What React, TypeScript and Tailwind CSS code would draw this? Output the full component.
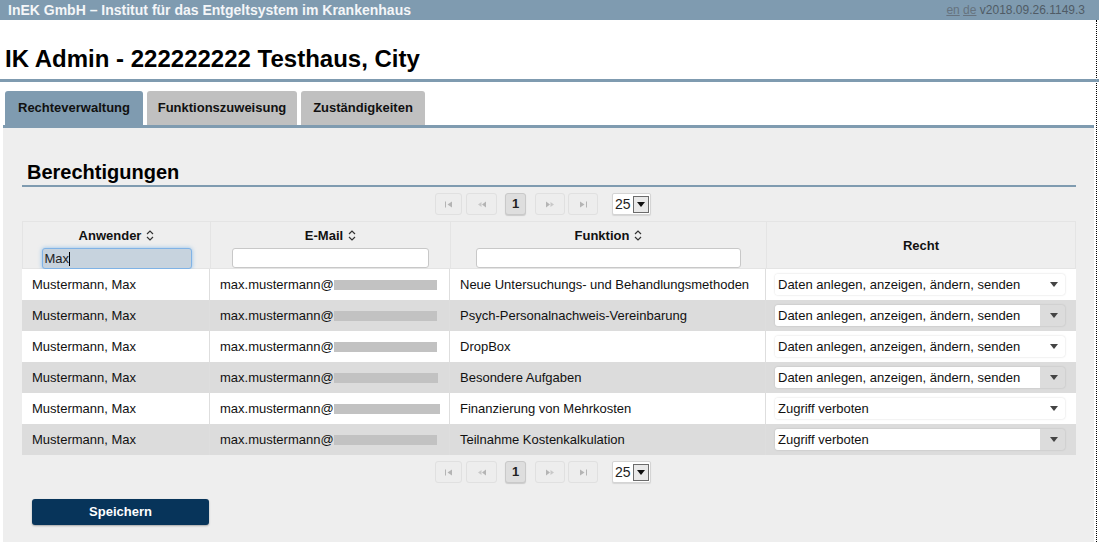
import React from 'react';

const rows: { funktion: string; recht: string; bar: number }[] = [
  { funktion: 'Neue Untersuchungs- und Behandlungsmethoden', recht: 'Daten anlegen, anzeigen, ändern, senden', bar: 103 },
  { funktion: 'Psych-Personalnachweis-Vereinbarung', recht: 'Daten anlegen, anzeigen, ändern, senden', bar: 103 },
  { funktion: 'DropBox', recht: 'Daten anlegen, anzeigen, ändern, senden', bar: 103 },
  { funktion: 'Besondere Aufgaben', recht: 'Daten anlegen, anzeigen, ändern, senden', bar: 104 },
  { funktion: 'Finanzierung von Mehrkosten', recht: 'Zugriff verboten', bar: 106 },
  { funktion: 'Teilnahme Kostenkalkulation', recht: 'Zugriff verboten', bar: 103 },
];

const PagIcon = ({ kind }: { kind: 'first' | 'prev' | 'next' | 'last' }) => (
  <svg width="10" height="7" viewBox="0 0 10 7" className="fill-[#b4b4b4]">
    {kind === 'first' && (
      <>
        <rect x="1" y="0.5" width="1" height="6" />
        <polygon points="8,0.5 3.5,3.5 8,6.5" />
      </>
    )}
    {kind === 'prev' && (
      <>
        <polygon points="4.5,1 1,3.5 4.5,6" className="fill-[#c8c8c8]" />
        <polygon points="9,0.5 5,3.5 9,6.5" />
      </>
    )}
    {kind === 'next' && (
      <>
        <polygon points="1,0.5 5,3.5 1,6.5" />
        <polygon points="5.5,1 9,3.5 5.5,6" className="fill-[#c8c8c8]" />
      </>
    )}
    {kind === 'last' && (
      <>
        <polygon points="2,0.5 6.5,3.5 2,6.5" />
        <rect x="8" y="0.5" width="1" height="6" />
      </>
    )}
  </svg>
);

const pagBtn =
  'h-[22px] flex items-center justify-center rounded-[3px] border border-[#e0e0e0] bg-[#ededed]';

const Paginator = () => (
  <div className="flex items-center justify-center pr-[12px] h-[34px]">
    <div className={`${pagBtn} w-[27px]`}>
      <PagIcon kind="first" />
    </div>
    <div className={`${pagBtn} w-[31px] ml-[4px]`}>
      <PagIcon kind="prev" />
    </div>
    <div className="ml-[8px] w-[21px] h-[22px] flex items-center justify-center rounded-[3px] border border-[#c9c9c9] bg-[#dedede] shadow-[0_1px_1px_rgba(0,0,0,0.15)] text-[13px] font-bold text-[#222]">
      1
    </div>
    <div className={`${pagBtn} w-[30px] ml-[9px]`}>
      <PagIcon kind="next" />
    </div>
    <div className={`${pagBtn} w-[30px] ml-[3px]`}>
      <PagIcon kind="last" />
    </div>
    <div className="ml-[14px] w-[39px] h-[22px] flex items-center justify-between bg-white border border-[#d4d4d4] rounded-[2px] pl-[2px] pr-[1px] shadow-[0_1px_1px_rgba(0,0,0,0.1)]">
      <span className="text-[14px] text-[#222] leading-none">25</span>
      <span className="w-[16px] h-[17px] flex items-center justify-center border border-[#6b6b6b] bg-[#e9e9e9]">
        <svg width="8" height="5" viewBox="0 0 8 5">
          <polygon points="0,0 8,0 4,5" fill="#111" />
        </svg>
      </span>
    </div>
  </div>
);

const SortIcon = () => (
  <svg width="8" height="11" viewBox="0 0 8 11" className="ml-[5px]">
    <polyline points="1,4 4,1 7,4" fill="none" stroke="#333" strokeWidth="1.2" />
    <polyline points="1,7 4,10 7,7" fill="none" stroke="#333" strokeWidth="1.2" />
  </svg>
);

const RowSelect = ({ value }: { value: string }) => (
  <div className="w-[290px] h-[21px] flex rounded-[3px] shadow-[0_0_2px_rgba(0,0,0,0.18)]">
    <div className="flex-1 bg-white rounded-l-[3px] flex items-center pl-[3px] text-[13px] text-[#111]">
      {value}
    </div>
    <div className="w-[23px] ml-[2px] flex items-center justify-center rounded-r-[3px]">
      <svg width="8" height="5" viewBox="0 0 8 5">
        <polygon points="0,0 8,0 4,5" fill="#444" />
      </svg>
    </div>
  </div>
);

export default function App() {
  return (
    <div className="h-screen flex flex-col bg-white font-['Liberation_Sans',Arial,sans-serif] text-[#111] overflow-hidden">
      {/* Top bar */}
      <div className="h-[20px] shrink-0 bg-[#7f9bb0] flex items-center justify-between pl-[8px] pr-[14px]">
        <span className="text-[14px] font-bold text-[#f4f6f8]">
          InEK GmbH – Institut für das Entgeltsystem im Krankenhaus
        </span>
        <span className="text-[12px] text-[#505b66]">
          <a className="underline text-[#66737f]">en</a>{' '}
          <a className="underline text-[#66737f]">de</a>{' '}
          v2018.09.26.1149.3
        </span>
      </div>

      <div className="w-[1097px] flex-1 flex flex-col border-r border-dotted border-black">
        {/* Title */}
        <div className="h-[59px] shrink-0 pl-[5px] pt-[25px]">
          <h1 className="text-[24px] leading-[28px] font-bold text-black">
            IK Admin - 222222222 Testhaus, City
          </h1>
        </div>
        <div className="h-[3px] shrink-0 bg-[#7f9bb0] -mr-[3px]" />

        {/* Tabs */}
        <div className="shrink-0 pt-[9px] pl-[5px] flex gap-[4px]">
          <div className="w-[138px] h-[34px] rounded-t-[3px] bg-[#7f9bb0] flex items-center justify-center text-[13px] font-bold text-[#111]">
            Rechteverwaltung
          </div>
          <div className="w-[150px] h-[34px] rounded-t-[3px] bg-[#c0c0c0] flex items-center justify-center text-[13px] font-bold text-[#111]">
            Funktionszuweisung
          </div>
          <div className="w-[124px] h-[34px] rounded-t-[3px] bg-[#c0c0c0] flex items-center justify-center text-[13px] font-bold text-[#111]">
            Zuständigkeiten
          </div>
        </div>
        <div className="h-[3px] shrink-0 ml-[3px] mr-[2px] bg-[#7f9bb0]" />

        {/* Content */}
        <div className="flex-1 ml-[3px] mr-[2px] bg-[#eeeeee] pt-[32px] pl-[19px] pr-[18px]">
          <div className="w-[1054px]">
            <h2 className="pl-[5px] text-[20px] leading-[24px] font-bold text-black pb-[1px] border-b-2 border-[#7f9bb0]">
              Berechtigungen
            </h2>

            <Paginator />

            {/* Table */}
            <div className="grid grid-cols-[188px_240px_316px_310px]">
              <div className="h-[48px] border border-[#e4e4e4] border-r-0 flex flex-col items-center pt-[6px]">
                <div className="flex items-center text-[13px] font-bold h-[15px]">
                  Anwender
                  <SortIcon />
                </div>
                <div className="mt-[5px] w-[150px] h-[21px] rounded-[3px] border border-[#80b3e6] bg-[#c7d3de] shadow-[0_0_4px_rgba(82,160,230,0.6)] flex items-center pl-[2px] text-[13px] text-[#222]">
                  Max
                  <span className="w-px h-[14px] bg-black" />
                </div>
              </div>
              <div className="h-[48px] border border-[#e4e4e4] border-r-0 flex flex-col items-center pt-[6px]">
                <div className="flex items-center text-[13px] font-bold h-[15px]">
                  E-Mail
                  <SortIcon />
                </div>
                <div className="mt-[5px] w-[197px] h-[21px] rounded-[3px] border border-[#c8c8c8] bg-white" />
              </div>
              <div className="h-[48px] border border-[#e4e4e4] border-r-0 flex flex-col items-center pt-[6px]">
                <div className="flex items-center text-[13px] font-bold h-[15px]">
                  Funktion
                  <SortIcon />
                </div>
                <div className="mt-[5px] w-[265px] h-[21px] rounded-[3px] border border-[#c8c8c8] bg-white" />
              </div>
              <div className="h-[48px] border border-[#e4e4e4] flex items-center justify-center text-[13px] font-bold pt-[2px]">
                Recht
              </div>

              {rows.map((r, i) => {
                const bg = i % 2 === 0 ? 'bg-white' : 'bg-[#dcdcdc]';
                const cell = `${bg} h-[31px] flex items-center text-[13px] text-[#111]`;
                return (
                  <React.Fragment key={i}>
                    <div className={`${cell} pl-[10px] border-r border-[#dedede]`}>Mustermann, Max</div>
                    <div className={`${cell} pl-[10px] border-r border-[#dedede]`}>
                      max.mustermann@
                      <span className="h-[10px] bg-[#c2c2c2]" style={{ width: r.bar }} />
                    </div>
                    <div className={`${cell} pl-[10px] border-r border-[#dedede]`}>{r.funktion}</div>
                    <div className={`${cell} pl-[9px]`}>
                      <RowSelect value={r.recht} />
                    </div>
                  </React.Fragment>
                );
              })}
            </div>

            <Paginator />

            <button className="mt-[10px] ml-[10px] w-[177px] h-[26px] rounded-[3px] bg-[#07345a] text-white text-[13px] font-bold shadow-[0_1px_2px_rgba(0,0,0,0.3)]">
              Speichern
            </button>
          </div>
        </div>
      </div>
    </div>
  );
}
